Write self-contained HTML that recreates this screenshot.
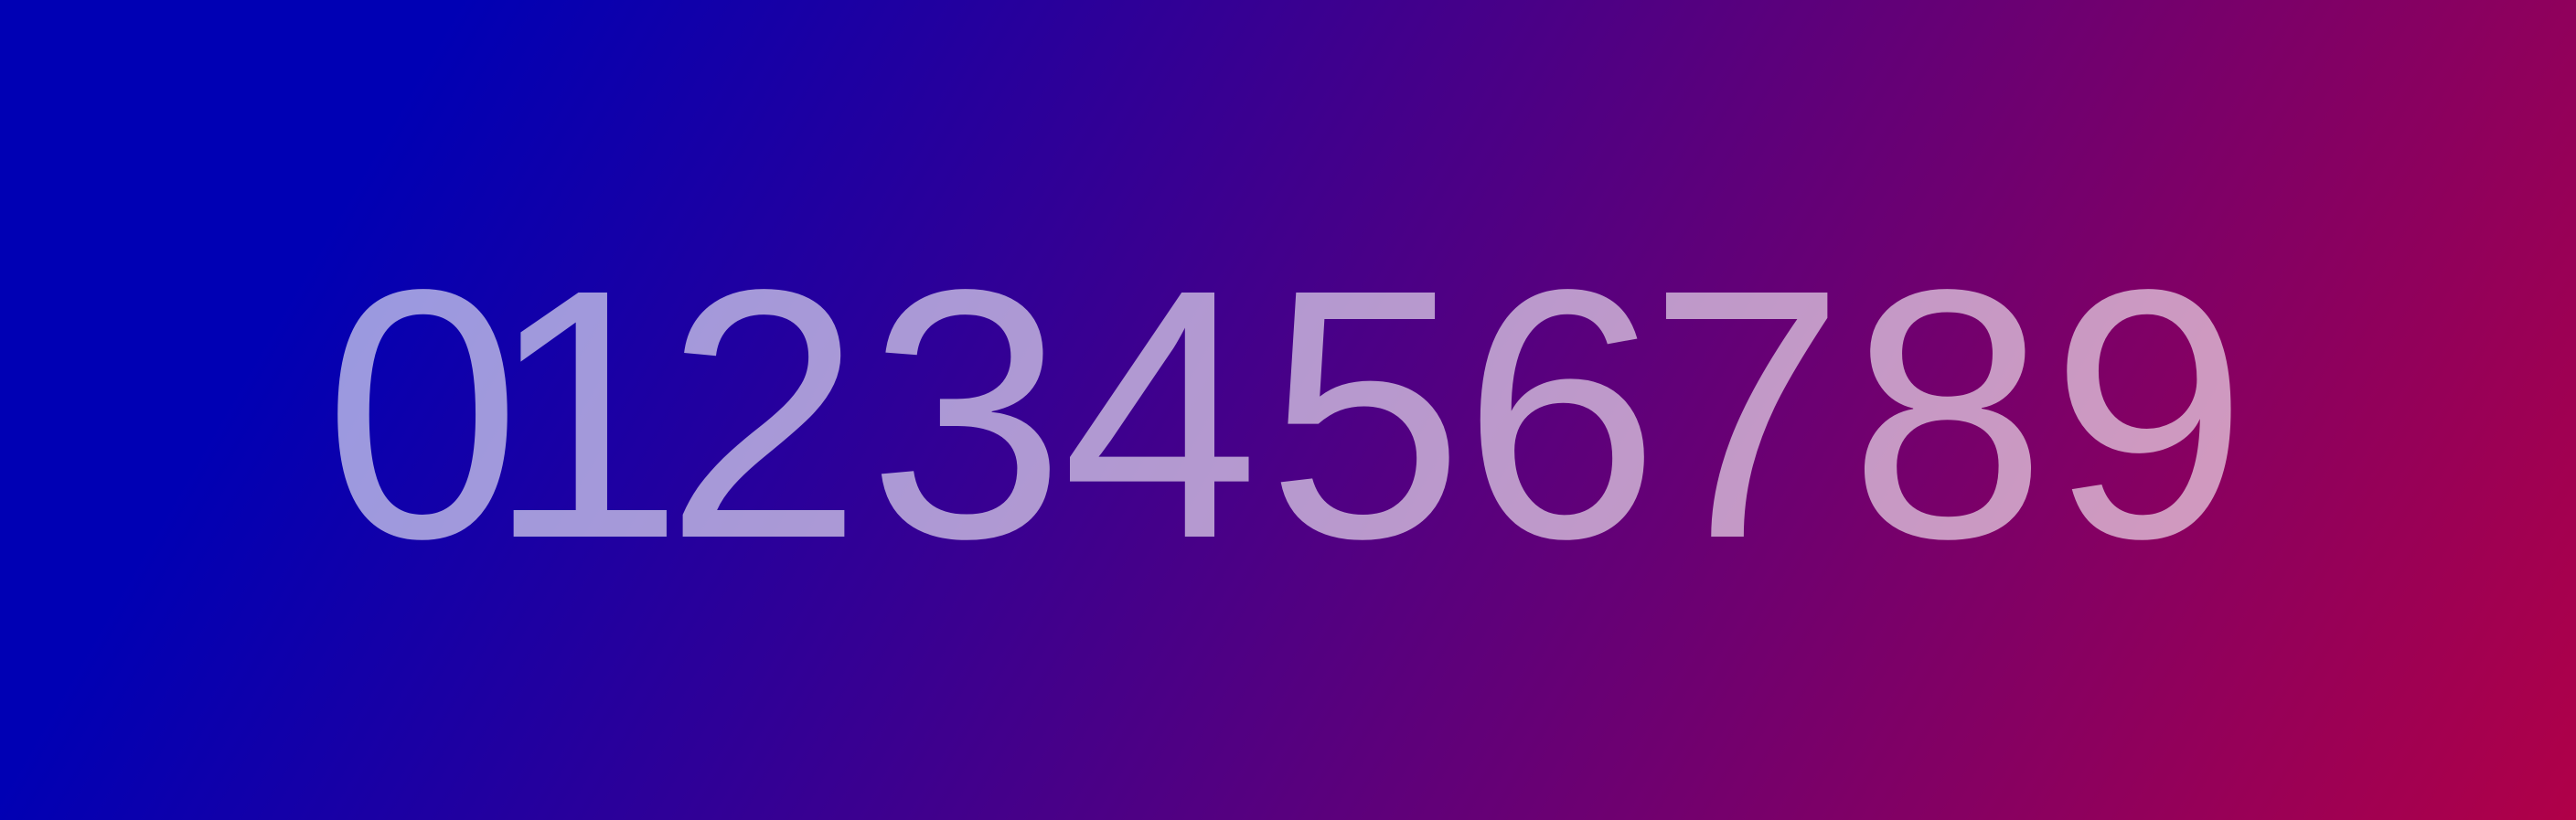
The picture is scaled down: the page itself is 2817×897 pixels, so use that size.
<!DOCTYPE html>
<html><head><meta charset="utf-8"><style>
html,body{margin:0;padding:0}
body{width:2817px;height:897px;overflow:hidden;position:relative;
background:linear-gradient(120deg,#0000b4 15%,#b00048 100%);}
.d{position:absolute;top:260px;width:240px;text-align:center;
font-family:"Liberation Sans",sans-serif;font-weight:normal;font-size:388px;line-height:388px;color:rgba(255,255,255,0.6);}
</style></head><body>
<div class="d" style="left:342px">0</div>
<div class="d" style="left:520px">1</div>
<div class="d" style="left:715px">2</div>
<div class="d" style="left:937px">3</div>
<div class="d" style="left:1149px">4</div>
<div class="d" style="left:1373px">5</div>
<div class="d" style="left:1587px">6</div>
<div class="d" style="left:1790px">7</div>
<div class="d" style="left:2010px">8</div>
<div class="d" style="left:2230px">9</div>
</body></html>
